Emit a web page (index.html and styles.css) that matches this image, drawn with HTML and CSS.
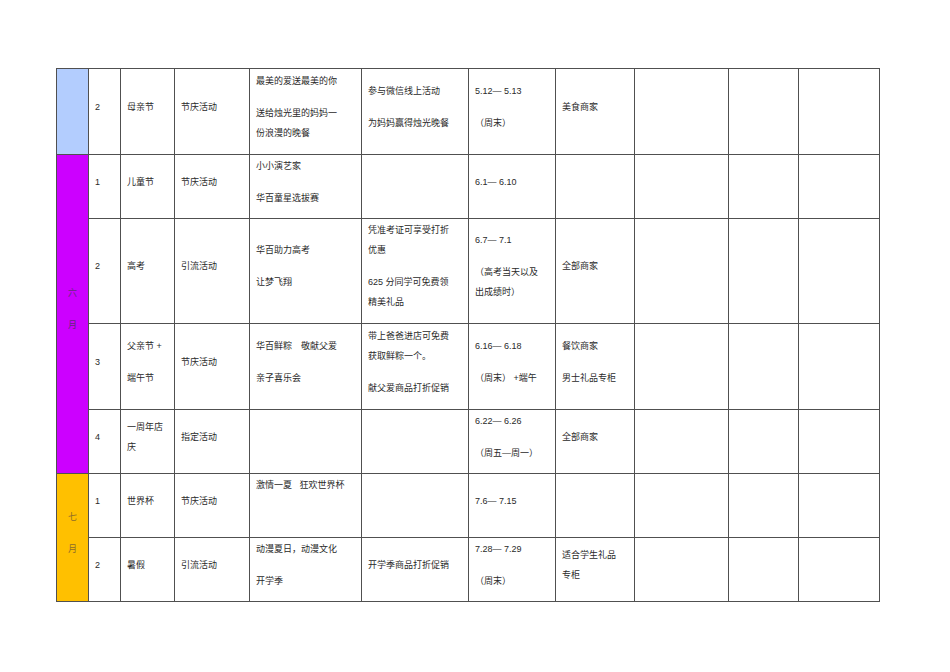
FILE: index.html
```html
<!DOCTYPE html>
<html lang="zh">
<head>
<meta charset="utf-8">
<title>活动计划表</title>
<link rel="stylesheet" href="styles.css">
</head>
<body>
<div class="page">
<table class="plan">
  <colgroup>
    <col class="c0"><col class="c1"><col class="c2"><col class="c3"><col class="c4"><col class="c5"><col class="c6"><col class="c7"><col class="c8"><col class="c9"><col class="c10">
  </colgroup>
  <tbody>
    <tr class="r86">
      <td class="month blue"></td>
      <td>2</td>
      <td>母亲节</td>
      <td>节庆活动</td>
      <td><p>最美的爱送最美的你</p><p>送给烛光里的妈妈一<br>份浪漫的晚餐</p></td>
      <td><p>参与微信线上活动</p><p>为妈妈赢得烛光晚餐</p></td>
      <td><p>5.12— 5.13</p><p>（周末）</p></td>
      <td>美食商家</td>
      <td></td><td></td><td></td>
    </tr>
    <tr class="r64">
      <td class="month purple" rowspan="4"><p>六</p><p>月</p></td>
      <td>1</td>
      <td>儿童节</td>
      <td>节庆活动</td>
      <td><p>小小演艺家</p><p>华百童星选拔赛</p></td>
      <td></td>
      <td>6.1— 6.10</td>
      <td></td>
      <td></td><td></td><td></td>
    </tr>
    <tr class="r105">
      <td>2</td>
      <td>高考</td>
      <td>引流活动</td>
      <td><p>华百助力高考</p><p>让梦飞翔</p></td>
      <td><p>凭准考证可享受打折<br>优惠</p><p>625 分同学可免费领<br>精美礼品</p></td>
      <td><p>6.7— 7.1</p><p>（高考当天以及<br>出成绩时）</p></td>
      <td>全部商家</td>
      <td></td><td></td><td></td>
    </tr>
    <tr class="r86">
      <td>3</td>
      <td><p>父亲节 +</p><p>端午节</p></td>
      <td>节庆活动</td>
      <td><p>华百鲜粽　敬献父爱</p><p>亲子喜乐会</p></td>
      <td><p>带上爸爸进店可免费<br>获取鲜粽一个。</p><p>献父爱商品打折促销</p></td>
      <td><p>6.16— 6.18</p><p>（周末） +端午</p></td>
      <td><p>餐饮商家</p><p>男士礼品专柜</p></td>
      <td></td><td></td><td></td>
    </tr>
    <tr class="r64">
      <td>4</td>
      <td>一周年店<br>庆</td>
      <td>指定活动</td>
      <td></td>
      <td></td>
      <td><p>6.22— 6.26</p><p>（周五—周一）</p></td>
      <td>全部商家</td>
      <td></td><td></td><td></td>
    </tr>
    <tr class="r64">
      <td class="month orange" rowspan="2"><p>七</p><p>月</p></td>
      <td>1</td>
      <td>世界杯</td>
      <td>节庆活动</td>
      <td><p>激情一夏&nbsp;&nbsp;&nbsp;狂欢世界杯</p><p>&nbsp;</p></td>
      <td></td>
      <td>7.6— 7.15</td>
      <td></td>
      <td></td><td></td><td></td>
    </tr>
    <tr class="r64">
      <td>2</td>
      <td>暑假</td>
      <td>引流活动</td>
      <td><p>动漫夏日，动漫文化</p><p>开学季</p></td>
      <td>开学季商品打折促销</td>
      <td><p>7.28— 7.29</p><p>（周末）</p></td>
      <td>适合学生礼品<br>专柜</td>
      <td></td><td></td><td></td>
    </tr>
  </tbody>
</table>
</div>
</body>
</html>
```
FILE: styles.css
```css
html, body {
  margin: 0;
  padding: 0;
  background: #ffffff;
}

.page {
  padding: 68px 0 0 56px;
}

.plan {
  border-collapse: collapse;
  table-layout: fixed;
  width: 823px;
  font-family: "Liberation Sans", "Noto Sans CJK SC", sans-serif;
  font-size: 9px;
  line-height: 20px;
  color: #2a2a2a;
}

.c0 { width: 32px; }
.c1 { width: 32px; }
.c2 { width: 54px; }
.c3 { width: 75px; }
.c4 { width: 112px; }
.c5 { width: 107px; }
.c6 { width: 87px; }
.c7 { width: 79px; }
.c8 { width: 94px; }
.c9 { width: 70px; }
.c10 { width: 81px; }

.plan td {
  border: 1px solid #505050;
  padding: 0 2px 10px 6px;
  vertical-align: middle;
  white-space: nowrap;
  overflow: hidden;
}

.plan p {
  margin: 0;
}

.plan p + p {
  margin-top: 12px;
}

.r86 { height: 86px; }
.r64 { height: 64px; }
.r105 { height: 105px; }

.plan td.month {
  padding-left: 0;
  padding-right: 0;
  text-align: center;
}

.blue { background: #b3cdfe; }
.purple { background: #cc00ff; color: #66287c; }
.orange { background: #ffc000; color: #8e6c2a; }
```
